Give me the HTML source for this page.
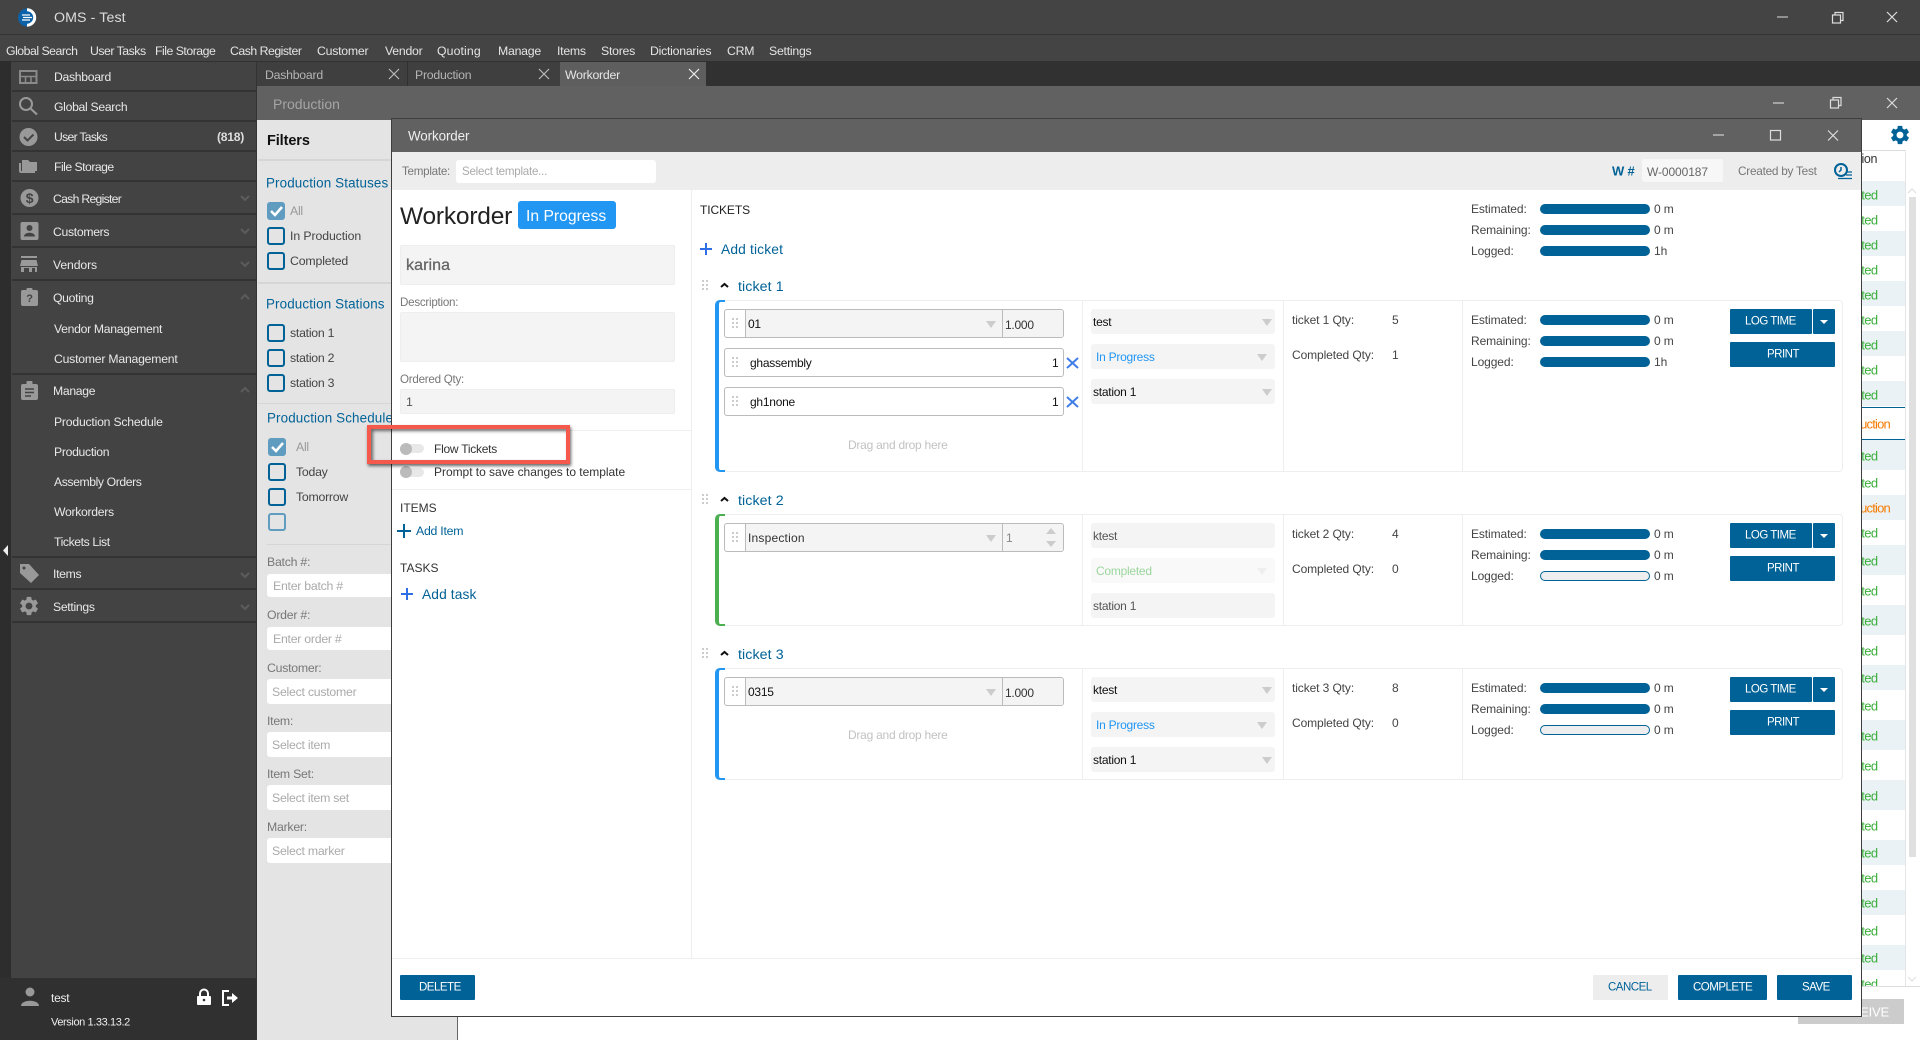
<!DOCTYPE html>
<html><head><meta charset="utf-8"><title>OMS - Test</title>
<style>
html,body{margin:0;padding:0;width:1920px;height:1040px;overflow:hidden;background:#fff}
body{position:relative;font-family:"Liberation Sans",sans-serif;font-size:12.3px;letter-spacing:-.25px;color:#444}
i{position:absolute;font-style:normal;white-space:nowrap;line-height:1;transform:translateY(-50%)}
div{position:absolute;box-sizing:border-box}
.w{color:#e4e4e4}.ws{letter-spacing:-.5px}
.s{font-size:12.2px;letter-spacing:-.3px;color:#e8e8e8}
.h{color:#016297;font-size:13.4px;letter-spacing:.13px}
.c{width:18px;height:18px;border:2px solid #016297;border-radius:3px}
.k{background:#609cbf;border-color:#609cbf}
.l{background:#fff;border-radius:3px}
.ph{color:#aaa}.g{color:#777}
.sep{background:#333;height:2px;left:12px;width:244px}
.fs{background:#d6d6d6;height:1px;left:258px;width:140px}
.sel{background:#f4f4f4;border-radius:3px;left:1091px;width:184px;height:25px}
.row{left:724px;width:340px;height:29px;border:1px solid #bbb;border-radius:3px;background:#fff}
.bar{left:1540px;width:110px;height:10px;border-radius:5px;background:#016297}
.bo{background:#eee;border:1px solid #016297}
.btn{background:#016297;border-radius:1px;height:25px}
.bt{color:#fff;font-size:11.5px;letter-spacing:-.5px;margin-top:1px}
.tk{color:#016297;font-size:14.2px;letter-spacing:.1px;margin-top:1px}
.v{color:#111;font-size:12px}
.o{color:#444;font-size:12px;letter-spacing:-.1px}
.ted{color:#3bae3b;font-size:13px;letter-spacing:-.6px;left:1820px;width:57px;text-align:right}
.uc{color:#f57c00;font-size:13px;letter-spacing:-.8px;left:1790px;width:100px;text-align:right}
</style></head><body>

<div style="left:0;top:0;width:1920px;height:62px;background:#444"></div>
<div style="left:0;top:34px;width:1920px;height:1px;background:#343434"></div>
<i style="left:54px;top:18px;font-size:14.2px;color:#ddd;letter-spacing:.1px">OMS - Test</i>
<i class="w ws" style="left:6px;top:51px">Global Search</i>
<i class="w ws" style="left:90px;top:51px">User Tasks</i>
<i class="w ws" style="left:155px;top:51px">File Storage</i>
<i class="w ws" style="left:230px;top:51px">Cash Register</i>
<i class="w" style="left:317px;top:51px">Customer</i>
<i class="w" style="left:385px;top:51px">Vendor</i>
<i class="w" style="left:437px;top:51px;letter-spacing:.1px">Quoting</i>
<i class="w" style="left:498px;top:51px">Manage</i>
<i class="w" style="left:557px;top:51px">Items</i>
<i class="w" style="left:601px;top:51px">Stores</i>
<i class="w" style="left:650px;top:51px">Dictionaries</i>
<i class="w" style="left:727px;top:51px">CRM</i>
<i class="w" style="left:769px;top:51px">Settings</i>

<div style="left:0;top:61px;width:1920px;height:25px;background:#313131"></div>
<div style="left:0;top:61px;width:11px;height:979px;background:#2d2d2d"></div>
<div style="left:11px;top:62px;width:245px;height:916px;background:#434343"></div>
<div style="left:0;top:978px;width:257px;height:62px;background:#303030"></div>
<div style="left:256px;top:62px;width:1px;height:978px;background:#333"></div>

<div class="sep" style="top:90px"></div><div class="sep" style="top:120px"></div><div class="sep" style="top:150px"></div><div class="sep" style="top:180px"></div><div class="sep" style="top:213px"></div><div class="sep" style="top:246px"></div><div class="sep" style="top:279px"></div><div class="sep" style="top:373px"></div><div class="sep" style="top:556px"></div><div class="sep" style="top:588px"></div><div class="sep" style="top:621px"></div>

<i class="s" style="left:54px;top:77px">Dashboard</i>
<i class="s" style="left:54px;top:107px">Global Search</i>
<i class="s" style="left:54px;top:137px;letter-spacing:-.7px">User Tasks</i>
<i class="s" style="left:217px;top:137px;font-weight:bold;color:#ddd">(818)</i>
<i class="s" style="left:54px;top:167px;letter-spacing:-.5px">File Storage</i>
<i class="s" style="left:53px;top:199px;letter-spacing:-.7px">Cash Register</i>
<i class="s" style="left:53px;top:232px">Customers</i>
<i class="s" style="left:53px;top:265px;letter-spacing:-.1px">Vendors</i>
<i class="s" style="left:53px;top:298px">Quoting</i>
<i class="s" style="left:54px;top:329px">Vendor Management</i>
<i class="s" style="left:54px;top:359px;letter-spacing:-.2px">Customer Management</i>
<i class="s" style="left:53px;top:391px">Manage</i>
<i class="s" style="left:54px;top:422px;letter-spacing:-.2px">Production Schedule</i>
<i class="s" style="left:54px;top:452px">Production</i>
<i class="s" style="left:54px;top:482px;letter-spacing:-.4px">Assembly Orders</i>
<i class="s" style="left:54px;top:512px">Workorders</i>
<i class="s" style="left:54px;top:542px;letter-spacing:-.4px">Tickets List</i>
<i class="s" style="left:53px;top:574px">Items</i>
<i class="s" style="left:53px;top:607px">Settings</i>
<i style="left:51px;top:998px;color:#eee;font-size:12px">test</i>
<i style="left:51px;top:1023px;color:#eee;font-size:11px;letter-spacing:-.4px">Version 1.33.13.2</i>

<div style="left:257px;top:62px;width:150px;height:24px;background:#3f3f3f"></div>
<div style="left:408px;top:62px;width:152px;height:24px;background:#3f3f3f"></div>
<div style="left:560px;top:62px;width:146px;height:24px;background:#5e5e5e"></div>
<i style="left:265px;top:75px;color:#b5b5b5">Dashboard</i>
<i style="left:415px;top:75px;color:#b5b5b5">Production</i>
<i style="left:565px;top:75px;color:#e6e6e6">Workorder</i>

<div style="left:257px;top:86px;width:1663px;height:34px;background:#616161"></div>
<i style="left:273px;top:104px;color:#a5a5a5;font-size:14px;letter-spacing:0">Production</i>

<!-- filter panel -->
<div style="left:257px;top:120px;width:200px;height:920px;background:#e4e4e4"></div>
<div style="left:457px;top:1016px;width:1px;height:24px;background:#666"></div>
<i style="left:267px;top:141px;color:#111;font-size:14.5px;font-weight:bold;letter-spacing:-.1px">Filters</i>
<div class="fs" style="top:159px;height:2px"></div>
<i class="h" style="left:266px;top:183px">Production Statuses</i>
<div class="c k" style="left:267px;top:202px"></div>
<i style="left:290px;top:211px;color:#999">All</i>
<div class="c" style="left:267px;top:227px"></div>
<i style="left:290px;top:236px;letter-spacing:-.1px">In Production</i>
<div class="c" style="left:267px;top:252px"></div>
<i style="left:290px;top:261px;letter-spacing:-.15px">Completed</i>
<div class="fs" style="top:282px;height:2px"></div>
<i class="h" style="left:266px;top:304px">Production Stations</i>
<div class="c" style="left:267px;top:324px"></div>
<i style="left:290px;top:333px">station 1</i>
<div class="c" style="left:267px;top:349px"></div>
<i style="left:290px;top:358px">station 2</i>
<div class="c" style="left:267px;top:374px"></div>
<i style="left:290px;top:383px">station 3</i>
<div class="fs" style="top:403px"></div>
<i class="h" style="left:267px;top:418px">Production Schedule</i>
<div class="c k" style="left:268px;top:438px"></div>
<i style="left:296px;top:447px;color:#999">All</i>
<div class="c" style="left:268px;top:463px"></div>
<i style="left:296px;top:472px">Today</i>
<div class="c" style="left:268px;top:488px"></div>
<i style="left:296px;top:497px">Tomorrow</i>
<div class="c" style="left:268px;top:513px;border-color:#609cbf"></div>
<div class="fs" style="top:544px;left:267px"></div>
<i class="g" style="left:267px;top:562px">Batch #:</i>
<div class="l" style="left:267px;top:574px;width:130px;height:23px"></div>
<i class="ph" style="left:273px;top:586px">Enter batch #</i>
<i class="g" style="left:267px;top:615px">Order #:</i>
<div class="l" style="left:267px;top:627px;width:130px;height:23px"></div>
<i class="ph" style="left:273px;top:639px">Enter order #</i>
<i class="g" style="left:267px;top:668px">Customer:</i>
<div class="l" style="left:267px;top:679px;width:130px;height:25px"></div>
<i class="ph" style="left:272px;top:692px">Select customer</i>
<i class="g" style="left:267px;top:721px">Item:</i>
<div class="l" style="left:267px;top:732px;width:130px;height:25px"></div>
<i class="ph" style="left:272px;top:745px">Select item</i>
<i class="g" style="left:267px;top:774px">Item Set:</i>
<div class="l" style="left:267px;top:785px;width:130px;height:25px"></div>
<i class="ph" style="left:272px;top:798px">Select item set</i>
<i class="g" style="left:267px;top:827px">Marker:</i>
<div class="l" style="left:267px;top:838px;width:130px;height:25px"></div>
<i class="ph" style="left:272px;top:851px">Select marker</i>

<!-- right production table sliver -->
<div style="left:1861px;top:150px;width:44px;height:1px;background:#ddd"></div>
<div style="left:1861px;top:181px;width:44px;height:1px;background:#ccc"></div>
<div style="left:1905px;top:150px;width:1px;height:836px;background:#e5e5e5"></div>
<div style="left:1909px;top:197px;width:7px;height:660px;background:#e0e0e0"></div>
<i style="left:1820px;top:159px;width:57px;text-align:right;color:#333;font-size:12.5px;letter-spacing:-.4px">Station</i>
<div style="left:1861px;top:181px;width:44px;height:25px;background:#eaf2f5"></div>
<div style="left:1861px;top:231px;width:44px;height:25px;background:#eaf2f5"></div>
<div style="left:1861px;top:281px;width:44px;height:25px;background:#eaf2f5"></div>
<div style="left:1861px;top:331px;width:44px;height:25px;background:#eaf2f5"></div>
<div style="left:1861px;top:381px;width:44px;height:25px;background:#eaf2f5"></div>
<div style="left:1861px;top:407px;width:44px;height:1px;background:#016297"></div>
<div style="left:1861px;top:439px;width:44px;height:1px;background:#016297"></div>
<div style="left:1861px;top:440px;width:44px;height:30px;background:#eaf2f5"></div>
<div style="left:1861px;top:495px;width:44px;height:25px;background:#eaf2f5"></div>
<div style="left:1861px;top:545px;width:44px;height:30px;background:#eaf2f5"></div>
<div style="left:1861px;top:605px;width:44px;height:30px;background:#eaf2f5"></div>
<div style="left:1861px;top:665px;width:44px;height:25px;background:#eaf2f5"></div>
<div style="left:1861px;top:720px;width:44px;height:30px;background:#eaf2f5"></div>
<div style="left:1861px;top:780px;width:44px;height:30px;background:#eaf2f5"></div>
<div style="left:1861px;top:840px;width:44px;height:25px;background:#eaf2f5"></div>
<div style="left:1861px;top:890px;width:44px;height:25px;background:#eaf2f5"></div>
<div style="left:1861px;top:945px;width:44px;height:25px;background:#eaf2f5"></div>
<i class="ted" style="top:195px">Completed</i><i class="ted" style="top:220px">Completed</i><i class="ted" style="top:245px">Completed</i><i class="ted" style="top:270px">Completed</i><i class="ted" style="top:295px">Completed</i><i class="ted" style="top:320px">Completed</i><i class="ted" style="top:345px">Completed</i><i class="ted" style="top:370px">Completed</i><i class="ted" style="top:395px">Completed</i>
<i class="uc" style="top:424px">In Production</i>
<i class="ted" style="top:456px">Completed</i><i class="ted" style="top:483px">Completed</i>
<i class="uc" style="top:508px">In Production</i>
<i class="ted" style="top:533px">Completed</i><i class="ted" style="top:561px">Completed</i><i class="ted" style="top:591px">Completed</i><i class="ted" style="top:621px">Completed</i><i class="ted" style="top:651px">Completed</i><i class="ted" style="top:678px">Completed</i><i class="ted" style="top:706px">Completed</i><i class="ted" style="top:736px">Completed</i><i class="ted" style="top:766px">Completed</i><i class="ted" style="top:796px">Completed</i><i class="ted" style="top:826px">Completed</i><i class="ted" style="top:853px">Completed</i><i class="ted" style="top:878px">Completed</i><i class="ted" style="top:903px">Completed</i><i class="ted" style="top:931px">Completed</i><i class="ted" style="top:958px">Completed</i><i class="ted" style="top:984px">Completed</i>
<div style="left:1861px;top:986px;width:59px;height:13px;background:#fff;border-top:1px solid #ddd"></div>
<div style="left:1798px;top:999px;width:106px;height:25px;background:#ccc"></div>
<i style="left:1798px;width:91px;text-align:right;top:1012px;font-size:13px;color:#fff;letter-spacing:-.2px">RECEIVE</i>

<!-- modal -->
<div style="left:391px;top:118px;width:1471px;height:899px;background:#fff;border:1px solid #3e3e3e"></div>
<div style="left:392px;top:119px;width:1469px;height:33px;background:#616161"></div>
<i style="left:408px;top:136px;color:#eee;font-size:13.4px;letter-spacing:-.1px">Workorder</i>
<div style="left:392px;top:152px;width:1469px;height:38px;background:#ededed"></div>
<i class="g" style="left:402px;top:172px;font-size:11.6px">Template:</i>
<div class="l" style="left:456px;top:160px;width:200px;height:23px"></div>
<i class="ph" style="left:462px;top:172px;font-size:11.6px">Select template...</i>
<i style="left:1612px;top:171px;color:#016297;font-size:13px;font-weight:bold;letter-spacing:-.2px">W #</i>
<div style="left:1642px;top:159px;width:81px;height:23px;background:#f7f7f7;border-radius:2px"></div>
<i style="left:1647px;top:172px;color:#666;font-size:12px;letter-spacing:-.1px">W-0000187</i>
<i style="left:1738px;top:172px;color:#777;font-size:11.8px">Created by Test</i>

<div style="left:691px;top:190px;width:1px;height:768px;background:#eee"></div>
<i style="left:400px;top:217px;color:#222;font-size:24.5px;letter-spacing:-.2px">Workorder</i>
<div style="left:518px;top:201px;width:98px;height:28px;background:#2196f3;border-radius:3px"></div>
<i style="left:526px;top:216.500px;color:#fff;font-size:15.7px;letter-spacing:0">In Progress</i>
<div style="left:400px;top:245px;width:275px;height:40px;background:#f4f4f4;border:1px solid #eee;border-radius:2px"></div>
<i style="left:406px;top:266px;color:#666;font-size:16px;letter-spacing:.1px;-webkit-text-stroke:.3px #666">karina</i>
<i class="g" style="left:400px;top:303px;font-size:11.6px">Description:</i>
<div style="left:400px;top:312px;width:275px;height:50px;background:#f4f4f4;border:1px solid #eee;border-radius:2px"></div>
<i class="g" style="left:400px;top:380px;font-size:11.6px">Ordered Qty:</i>
<div style="left:400px;top:389px;width:275px;height:25px;background:#f4f4f4;border:1px solid #eee;border-radius:2px"></div>
<i style="left:406px;top:402px;color:#555">1</i>
<div style="left:392px;top:430px;width:299px;height:1px;background:#eee"></div>
<div style="left:400px;top:444px;width:24px;height:9px;border-radius:5px;background:#e8e8e8"></div>
<div style="left:400px;top:443px;width:12px;height:12px;border-radius:6px;background:#bbb"></div>
<i class="v" style="left:434px;top:449px;color:#333">Flow Tickets</i>
<div style="left:400px;top:468px;width:24px;height:9px;border-radius:5px;background:#e8e8e8"></div>
<div style="left:400px;top:466px;width:12px;height:12px;border-radius:6px;background:#bbb"></div>
<i class="v" style="left:434px;top:472px;color:#333;letter-spacing:-.03px">Prompt to save changes to template</i>
<div style="left:392px;top:489px;width:299px;height:1px;background:#eee"></div>
<i style="left:400px;top:508px;color:#333;font-size:12px;letter-spacing:0">ITEMS</i>
<i style="left:416px;top:531px;color:#016297;font-size:12.3px">Add Item</i>
<i style="left:400px;top:568px;color:#333;font-size:12px;letter-spacing:0">TASKS</i>
<i style="left:422px;top:595px;color:#016297;font-size:13.8px;letter-spacing:.1px">Add task</i>

<i style="left:700px;top:210px;color:#222;font-size:12px;letter-spacing:-.1px">TICKETS</i>
<i style="left:721px;top:250px;color:#016297;font-size:13.8px;letter-spacing:.15px">Add ticket</i>
<i class="o" style="left:1471px;top:209px">Estimated:</i><i class="o" style="left:1471px;top:230px">Remaining:</i><i class="o" style="left:1471px;top:251px">Logged:</i>
<div class="bar" style="top:204px"></div><div class="bar" style="top:225px"></div><div class="bar" style="top:246px"></div>
<i class="o" style="left:1654px;top:209px">0 m</i><i class="o" style="left:1654px;top:230px">0 m</i><i class="o" style="left:1654px;top:251px">1h</i>

<!-- ticket 1 -->
<i class="tk" style="left:738px;top:286px">ticket 1</i>
<div style="left:715px;top:300px;width:1128px;height:172px;border:1px solid #eee;border-radius:4px"></div>
<div style="left:715px;top:300px;width:10px;height:172px;border:solid #2196f3;border-width:2px 0 2px 4px;border-radius:5px 0 0 5px"></div>
<div style="left:1082px;top:300px;width:1px;height:172px;background:#eee"></div>
<div style="left:1283px;top:300px;width:1px;height:172px;background:#eee"></div>
<div style="left:1462px;top:300px;width:1px;height:172px;background:#eee"></div>
<div class="row" style="top:309px"></div>
<div style="left:745px;top:310px;width:318px;height:27px;background:#f4f4f4;border-left:1px solid #bbb;border-radius:0 3px 3px 0"></div>
<div style="left:1002px;top:310px;width:1px;height:27px;background:#bbb"></div>
<i class="v" style="left:748px;top:324px">01</i><i class="v" style="left:1005px;top:325px;color:#333">1.000</i>
<div class="row" style="top:348px"></div>
<i class="v" style="left:750px;top:363px">ghassembly</i><i class="v" style="left:1052px;top:363px">1</i>
<div class="row" style="top:387px"></div>
<i class="v" style="left:750px;top:402px">gh1none</i><i class="v" style="left:1052px;top:402px">1</i>
<i style="left:848px;top:445px;color:#c2c2c2;font-size:12px">Drag and drop here</i>
<div class="sel" style="top:309px"></div><div class="sel" style="top:344px"></div><div class="sel" style="top:379px"></div>
<i class="v" style="left:1093px;top:322px">test</i>
<i class="v" style="left:1096px;top:357px;color:#2196f3">In Progress</i>
<i class="v" style="left:1093px;top:392px">station 1</i>
<i class="o" style="left:1292px;top:320px">ticket 1 Qty:</i><i class="o" style="left:1392px;top:320px">5</i>
<i class="o" style="left:1292px;top:355px">Completed Qty:</i><i class="o" style="left:1392px;top:355px">1</i>
<i class="o" style="left:1471px;top:320px">Estimated:</i><i class="o" style="left:1471px;top:341px">Remaining:</i><i class="o" style="left:1471px;top:362px">Logged:</i>
<div class="bar" style="top:315px"></div><div class="bar" style="top:336px"></div><div class="bar" style="top:357px"></div>
<i class="o" style="left:1654px;top:320px">0 m</i><i class="o" style="left:1654px;top:341px">0 m</i><i class="o" style="left:1654px;top:362px">1h</i>
<div class="btn" style="left:1730px;top:309px;width:82px"></div><div class="btn" style="left:1813px;top:309px;width:22px"></div>
<i class="bt" style="left:1745px;top:321px">LOG TIME</i>
<div class="btn" style="left:1730px;top:342px;width:105px"></div>
<i class="bt" style="left:1767px;top:354px">PRINT</i>

<!-- ticket 2 -->
<i class="tk" style="left:738px;top:500px">ticket 2</i>
<div style="left:715px;top:514px;width:1128px;height:112px;border:1px solid #eee;border-radius:4px"></div>
<div style="left:715px;top:514px;width:10px;height:112px;border:solid #4caf50;border-width:2px 0 2px 4px;border-radius:5px 0 0 5px"></div>
<div style="left:1082px;top:514px;width:1px;height:112px;background:#eee"></div>
<div style="left:1283px;top:514px;width:1px;height:112px;background:#eee"></div>
<div style="left:1462px;top:514px;width:1px;height:112px;background:#eee"></div>
<div class="row" style="top:523px"></div>
<div style="left:745px;top:524px;width:318px;height:27px;background:#f4f4f4;border-left:1px solid #bbb;border-radius:0 3px 3px 0"></div>
<div style="left:1002px;top:524px;width:1px;height:27px;background:#bbb"></div>
<i class="v" style="left:748px;top:538px;color:#333;letter-spacing:.2px">Inspection</i><i class="v" style="left:1006px;top:538px;color:#888">1</i>
<div class="sel" style="top:523px"></div><div class="sel" style="top:558px;background:#f9f9f9"></div><div class="sel" style="top:593px"></div>
<i class="v" style="left:1093px;top:536px;color:#555">ktest</i>
<i class="v" style="left:1096px;top:571px;color:#9bd69d">Completed</i>
<i class="v" style="left:1093px;top:606px;color:#555">station 1</i>
<i class="o" style="left:1292px;top:534px">ticket 2 Qty:</i><i class="o" style="left:1392px;top:534px">4</i>
<i class="o" style="left:1292px;top:569px">Completed Qty:</i><i class="o" style="left:1392px;top:569px">0</i>
<i class="o" style="left:1471px;top:534px">Estimated:</i><i class="o" style="left:1471px;top:555px">Remaining:</i><i class="o" style="left:1471px;top:576px">Logged:</i>
<div class="bar" style="top:529px"></div><div class="bar" style="top:550px"></div><div class="bar bo" style="top:571px"></div>
<i class="o" style="left:1654px;top:534px">0 m</i><i class="o" style="left:1654px;top:555px">0 m</i><i class="o" style="left:1654px;top:576px">0 m</i>
<div class="btn" style="left:1730px;top:523px;width:82px"></div><div class="btn" style="left:1813px;top:523px;width:22px"></div>
<i class="bt" style="left:1745px;top:535px">LOG TIME</i>
<div class="btn" style="left:1730px;top:556px;width:105px"></div>
<i class="bt" style="left:1767px;top:568px">PRINT</i>

<!-- ticket 3 -->
<i class="tk" style="left:738px;top:654px">ticket 3</i>
<div style="left:715px;top:668px;width:1128px;height:112px;border:1px solid #eee;border-radius:4px"></div>
<div style="left:715px;top:668px;width:10px;height:112px;border:solid #2196f3;border-width:2px 0 2px 4px;border-radius:5px 0 0 5px"></div>
<div style="left:1082px;top:668px;width:1px;height:112px;background:#eee"></div>
<div style="left:1283px;top:668px;width:1px;height:112px;background:#eee"></div>
<div style="left:1462px;top:668px;width:1px;height:112px;background:#eee"></div>
<div class="row" style="top:677px"></div>
<div style="left:745px;top:678px;width:318px;height:27px;background:#f4f4f4;border-left:1px solid #bbb;border-radius:0 3px 3px 0"></div>
<div style="left:1002px;top:678px;width:1px;height:27px;background:#bbb"></div>
<i class="v" style="left:748px;top:692px">0315</i><i class="v" style="left:1005px;top:693px;color:#333">1.000</i>
<i style="left:848px;top:735px;color:#c2c2c2;font-size:12px">Drag and drop here</i>
<div class="sel" style="top:677px"></div><div class="sel" style="top:712px"></div><div class="sel" style="top:747px"></div>
<i class="v" style="left:1093px;top:690px">ktest</i>
<i class="v" style="left:1096px;top:725px;color:#2196f3">In Progress</i>
<i class="v" style="left:1093px;top:760px">station 1</i>
<i class="o" style="left:1292px;top:688px">ticket 3 Qty:</i><i class="o" style="left:1392px;top:688px">8</i>
<i class="o" style="left:1292px;top:723px">Completed Qty:</i><i class="o" style="left:1392px;top:723px">0</i>
<i class="o" style="left:1471px;top:688px">Estimated:</i><i class="o" style="left:1471px;top:709px">Remaining:</i><i class="o" style="left:1471px;top:730px">Logged:</i>
<div class="bar" style="top:683px"></div><div class="bar" style="top:704px"></div><div class="bar bo" style="top:725px"></div>
<i class="o" style="left:1654px;top:688px">0 m</i><i class="o" style="left:1654px;top:709px">0 m</i><i class="o" style="left:1654px;top:730px">0 m</i>
<div class="btn" style="left:1730px;top:677px;width:82px"></div><div class="btn" style="left:1813px;top:677px;width:22px"></div>
<i class="bt" style="left:1745px;top:689px">LOG TIME</i>
<div class="btn" style="left:1730px;top:710px;width:105px"></div>
<i class="bt" style="left:1767px;top:722px">PRINT</i>

<!-- modal footer -->
<div style="left:392px;top:958px;width:1469px;height:1px;background:#eee"></div>
<div class="btn" style="left:400px;top:975px;width:75px"></div>
<i class="bt" style="left:419px;top:987px">DELETE</i>
<div class="btn" style="left:1593px;top:975px;width:75px;background:#ededed"></div>
<i class="bt" style="left:1608px;top:987px;color:#016297">CANCEL</i>
<div class="btn" style="left:1678px;top:975px;width:89px"></div>
<i class="bt" style="left:1693px;top:987px">COMPLETE</i>
<div class="btn" style="left:1777px;top:975px;width:75px"></div>
<i class="bt" style="left:1802px;top:987px">SAVE</i>

<!-- red highlight -->
<div style="left:367px;top:425px;width:203px;height:39px;border:4px solid #f4594c;box-shadow:1px 2px 3px rgba(0,0,0,.6),inset 2px 2px 3px rgba(0,0,0,.55)"></div>

<!-- icons -->
<svg width="1920" height="1040" viewBox="0 0 1920 1040" style="position:absolute;left:0;top:0">
<defs>
<symbol id="grip" overflow="visible"><g fill="#ccc"><rect width="2" height="2"/><rect x="4" width="2" height="2"/><rect y="4" width="2" height="2"/><rect x="4" y="4" width="2" height="2"/><rect y="8" width="2" height="2"/><rect x="4" y="8" width="2" height="2"/></g></symbol>
<path id="tri" d="M0 0h10l-5 7z"/>
<path id="gear" d="M19.14 12.94c.04-.3.06-.61.06-.94 0-.32-.02-.64-.07-.94l2.03-1.58a.49.49 0 0 0 .12-.61l-1.92-3.32a.488.488 0 0 0-.59-.22l-2.39.96c-.5-.38-1.03-.7-1.62-.94l-.36-2.54a.484.484 0 0 0-.48-.41h-3.84c-.24 0-.43.17-.47.41l-.36 2.54c-.59.24-1.13.57-1.62.94l-2.39-.96c-.22-.08-.47 0-.59.22L2.74 8.87c-.12.21-.08.47.12.61l2.03 1.58c-.05.3-.09.63-.09.94s.02.64.07.94l-2.03 1.58a.49.49 0 0 0-.12.61l1.92 3.32c.12.22.37.29.59.22l2.39-.96c.5.38 1.03.7 1.62.94l.36 2.54c.05.24.24.41.48.41h3.84c.24 0 .44-.17.47-.41l.36-2.54c.59-.24 1.13-.56 1.62-.94l2.39.96c.22.08.47 0 .59-.22l1.92-3.32c.12-.22.07-.47-.12-.61l-2.01-1.58zM12 15.6c-1.98 0-3.6-1.62-3.6-3.6s1.62-3.6 3.6-3.6 3.6 1.62 3.6 3.6-1.62 3.6-3.6 3.6z"/>
</defs>
<!-- logo -->
<circle cx="27" cy="17.500" r="9" fill="#0b62a8"/>
<path d="M27 9.800a7.700 7.700 0 0 1 0 15.400" fill="none" stroke="#fff" stroke-width="3"/>
<path d="M22 15h8M23 17.500h9M22 20h8" stroke="#fff" stroke-width="1.300"/>
<!-- window buttons -->
<g stroke="#ddd" stroke-width="1.200" fill="none">
<path d="M1777 17h11" stroke="#aaa" stroke-width="1.500"/><rect x="1832.500" y="15" width="8" height="8"/><path d="M1835 15v-2.500h8v8h-2.500"/><path d="M1887 12l10 10M1897 12l-10 10"/>
<path d="M1773 103h11" stroke="#bbb" stroke-width="1.500"/><rect x="1830.500" y="100" width="8" height="8"/><path d="M1833 100v-2.500h8v8h-2.500"/><path d="M1887 98l10 10M1897 98l-10 10"/>
<path d="M1713 135h11" stroke="#bbb" stroke-width="1.500"/><rect x="1770.500" y="130.500" width="10" height="9.500"/><path d="M1828 130.500l10 10M1838 130.500l-10 10"/>
<path d="M389 69l10 10M399 69l-10 10" stroke="#bbb"/><path d="M539 69l10 10M549 69l-10 10" stroke="#bbb"/><path d="M689 69l10 10M699 69l-10 10" stroke="#eee"/>
</g>
<!-- sidebar icons -->
<g fill="#999">
<rect x="20" y="71" width="16.500" height="12" fill="none" stroke="#8a8a8a" stroke-width="2"/><path d="M20 76.500h16M25.500 76.500v6M31 76.500v6" stroke="#8a8a8a" stroke-width="1.500"/>
<circle cx="26" cy="104" r="6" fill="none" stroke="#999" stroke-width="2"/><path d="M30.500 108.500l6.500 6" stroke="#999" stroke-width="2.200"/>
<circle cx="28.500" cy="137" r="9"/><path d="M24 137l3.500 3.500 6-6" fill="none" stroke="#444" stroke-width="2"/>
<path d="M19 163h2v8h14v2H21a2 2 0 0 1-2-2z"/><path d="M22 160h6l2 2h7v9H22z"/>
<circle cx="29.500" cy="198" r="9"/>
<rect x="20.500" y="222" width="18" height="18" rx="2"/><circle cx="29.500" cy="228" r="3" fill="#434343"/><path d="M24 236.500c0-5 11-5 11 0z" fill="#434343"/>
<rect x="21" y="256" width="16" height="2"/><path d="M21.500 260h15l1.500 6H20z"/><path d="M21 267h16v5H21z"/><rect x="24" y="268" width="5" height="4" fill="#434343"/><rect x="32" y="268" width="3" height="4" fill="#434343"/>
<rect x="21" y="290" width="17" height="16" rx="2"/><rect x="26.500" y="288" width="6" height="4" rx="1"/>
<rect x="21" y="384" width="17" height="16" rx="2"/><rect x="26.500" y="381" width="6" height="5" rx="1"/><path d="M25 389h9M25 392.500h9M25 396h6" stroke="#434343" stroke-width="1.500"/>
<path d="M20 564h9l10 11-8 8-11-10z"/><circle cx="24" cy="568" r="1.500" fill="#434343"/>
<use href="#gear" transform="translate(17.600 594.600) scale(.95)"/>
<circle cx="30" cy="992" r="4.500"/><path d="M21 1006c0-7 18-7 18 0z"/>
</g>
<text x="29.500" y="203" font-family="Liberation Sans" font-size="14" font-weight="bold" fill="#434343" text-anchor="middle">$</text>
<text x="29.500" y="302" font-family="Liberation Sans" font-size="11" font-weight="bold" fill="#434343" text-anchor="middle">?</text>
<g fill="none" stroke="#5c5c5c" stroke-width="2">
<path d="M241 196l4 4 4-4M241 229l4 4 4-4M241 262l4 4 4-4M241 573l4 4 4-4M241 605l4 4 4-4"/>
<path d="M241 299l4-4 4 4M241 392l4-4 4 4"/>
</g>
<path d="M8 545v11l-5-5.500z" fill="#eee"/>
<rect x="197" y="996" width="14" height="9" rx="1" fill="#fff"/><path d="M200 996v-2.500a4 4 0 0 1 8 0v2.500" fill="none" stroke="#fff" stroke-width="2"/><circle cx="204" cy="1000" r="1.300" fill="#303030"/>
<path d="M229 991h-6v14h6" fill="none" stroke="#fff" stroke-width="2"/><path d="M227 996.500h5v-3.500l6 5-6 5v-3.500h-5z" fill="#fff"/>
<!-- panel gear -->
<use href="#gear" transform="translate(1888.600 123.600) scale(.95)" fill="#016297"/>
<!-- scroll chevrons -->
<path d="M1908 193l4-4 4 4M1908 977l4 4 4-4" fill="none" stroke="#e5e5e5" stroke-width="1.500"/>
<!-- created icon -->
<g fill="none" stroke="#016297" stroke-width="2"><circle cx="1841" cy="170" r="6"/><path d="M1841 167v3l-2 2" stroke-width="1.500"/><path d="M1846 172h6M1846 175h6M1838 178.500h14" stroke-width="1.300"/></g>
<!-- pluses -->
<path d="M700 249h12M706 243v12" stroke="#2f6fe4" stroke-width="2"/>
<path d="M397 531h14M404 524v14" stroke="#016297" stroke-width="2"/>
<path d="M401 594h12M407 588v12" stroke="#2f6fe4" stroke-width="2"/>
<path d="M1067 358l11 10M1078 358l-11 10M1067 397l11 10M1078 397l-11 10" stroke="#3f7de8" stroke-width="2"/>
<!-- carets -->
<path d="M721 287l3.500-3 3.500 3M721 501l3.500-3 3.500 3M721 655l3.500-3 3.500 3" fill="none" stroke="#111" stroke-width="2"/>
<!-- grips -->
<use href="#grip" x="702" y="280"/><use href="#grip" x="702" y="494"/><use href="#grip" x="702" y="648"/>
<use href="#grip" x="732" y="318"/><use href="#grip" x="732" y="357"/><use href="#grip" x="732" y="396"/><use href="#grip" x="732" y="532"/><use href="#grip" x="732" y="686"/>
<!-- select arrows -->
<g fill="#ccc">
<use href="#tri" x="986" y="321"/><use href="#tri" x="986" y="535"/><use href="#tri" x="986" y="689"/>
<use href="#tri" x="1262" y="319"/><use href="#tri" x="1257" y="354"/><use href="#tri" x="1262" y="389"/>
<use href="#tri" x="1257" y="568" fill="#eee"/>
<use href="#tri" x="1262" y="687"/><use href="#tri" x="1257" y="722"/><use href="#tri" x="1262" y="757"/>
<path d="M1046 534l5-6 5 6zM1046 541l5 6 5-6z"/>
</g>
<!-- btn carets -->
<path d="M1820 320h8l-4 4zM1820 534h8l-4 4zM1820 688h8l-4 4z" fill="#fff"/>
<!-- checkmarks -->
<path d="M271 211l4 4 7-8M272 447l4 4 7-8" fill="none" stroke="#fff" stroke-width="2.500"/>
</svg>
</body></html>
